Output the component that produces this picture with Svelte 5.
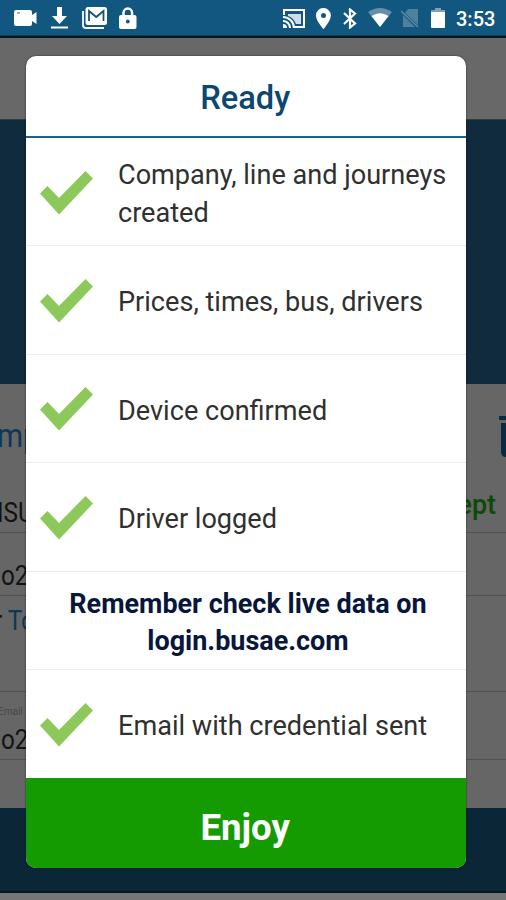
<script>
  const before = [
    { lines: ['Company, line and journeys', 'created'] },
    { lines: ['Prices, times, bus, drivers'] },
    { lines: ['Device confirmed'] },
    { lines: ['Driver logged'] }
  ];
  const after = [{ lines: ['Email with credential sent'] }];
</script>

{#snippet step(item)}
  <li class="step">
    <svg class="check" viewBox="0 0 53 44" aria-hidden="true"><path d="M0 22.5 7.5 15 19 27 45.5 0 53 7.5 19 43.5Z" /></svg>
    <p>{#each item.lines as line}<span>{line}</span>{/each}</p>
  </li>
{/snippet}

<div class="screen">
  <header class="status">
    <div class="left">
      <svg width="24" height="18" viewBox="0 0 24 18"><path fill="#fff" d="M2 1h14q2 0 2 2v3l4.500-3v12l-4.500-3v3q0 2-2 2H2q-2 0-2-2V3q0-2 2-2Z" /><path stroke="#789bad" stroke-width="1.5" d="M3 4h3" /></svg>
      <svg class="down" width="18" height="22" viewBox="0 0 18 22"><path fill="#fff" d="M6 0h5v9h5l-7.500 8L1 9h5ZM0 19.500h17v2H0Z" /></svg>
      <svg class="mail" width="26" height="22" viewBox="0 0 26 22"><path fill="none" stroke="#fff" stroke-width="1.800" d="M1 4v14q0 3 3 3h18" /><rect x="3.500" y="0" width="21.500" height="18" rx="2.500" fill="#fff" /><path fill="none" stroke="#165178" stroke-width="1.800" d="M7 14V4l7.200 6 7.300-6v10" /></svg>
      <svg class="lock" width="18" height="23" viewBox="0 0 18 23"><path fill="none" stroke="#fff" stroke-width="2.400" d="M4.500 10V6a4.300 4.500 0 0 1 8.600 0v4" /><rect y="8" width="17.500" height="14" rx="2" fill="#fff" /><circle cx="8.800" cy="14.500" r="1.900" fill="#125780" /></svg>
    </div>
    <div class="right">
      <svg class="cast" width="24" height="20" viewBox="0 0 24 20"><path fill="#fff" opacity=".8" d="M6 5h13v10h-5Q11 8 6 7Z" /><g fill="none" stroke="#fff" stroke-width="2"><path d="M2 6V1h20v17H13" /><path d="M1 8a11 11 0 0 1 11 11M1 12a7 7 0 0 1 7 7" /></g><path fill="#fff" d="M1 15a4 4 0 0 1 4 4H1Z" /></svg>
      <svg class="pin" width="16" height="21" viewBox="0 0 16 21"><path fill="#fff" fill-rule="evenodd" d="M7.500 0a7.300 7.300 0 0 1 7.300 7.500C14.800 13 7.500 21 7.500 21S0 13 0 7.500A7.300 7.300 0 0 1 7.500 0Zm0 5a2.500 2.500 0 1 0 0 5 2.500 2.500 0 0 0 0-5Z" /></svg>
      <svg class="bt" width="14" height="21" viewBox="0 0 14 21"><path fill="none" stroke="#fff" stroke-width="2.200" d="m1 5 11 10.500-5 4V1.500l5 4L1 16" /></svg>
      <svg class="wifi" width="24" height="20" viewBox="0 0 24 20"><path fill="#6690aa" d="M0 4Q12-4 24 4L12 19Z" /><path fill="#fff" d="M3.500 8Q12 2.500 20.500 8L12 19Z" /></svg>
      <svg class="sim" width="19" height="20" viewBox="0 0 19 20"><path fill="#4f809e" d="M7 0h10v16L4 4ZM2 6l12 12H2Z" /><path fill="none" stroke="#5f8ba6" stroke-width="1.600" d="m0 2 17 16" /></svg>
      <svg class="bat" width="15" height="21" viewBox="0 0 15 21"><path fill="#7fa0b5" d="M4 0h6v2h4v3H0V2h4Z" /><path fill="#fff" d="M0 4h14v15q0 1-1 1H1q-1 0-1-1Z" /></svg>
      <time>3:53</time>
    </div>
  </header>

  <main class="page" aria-hidden="true">
    <div class="toolbar"></div>
    <div class="banner"></div>
    <section class="form">
      <div class="row title"><span>mp</span>
        <svg width="7" height="42" viewBox="0 0 7 42"><path fill="#0b2b42" d="M0 0h7v4H0ZM2 7h5v34q-5 0-5-5Z" /></svg>
      </div>
      <div class="row account"><span>ISU</span><b>ept</b></div>
      <div class="row code"><span>o2</span></div>
      <div class="row to"><span>r <i>To</i></span></div>
      <div class="row mailrow"><small>Email</small><span>o2</span></div>
    </section>
    <div class="footer"></div>
  </main>

  <div class="dialog" role="dialog">
    <h1><span>Ready</span></h1>
    <ul>
      {#each before as item}{@render step(item)}{/each}
      <li class="note"><span>Remember check live data on</span><span>login.busae.com</span></li>
      {#each after as item}{@render step(item)}{/each}
    </ul>
    <button><span>Enjoy</span></button>
  </div>
</div>

<style>
  .screen { position: relative; width: 506px; height: 900px; overflow: hidden; display: flex; flex-direction: column; background: #767676; font-family: Roboto, "Noto Sans", sans-serif; }
  .status { height: 36px; box-sizing: border-box; flex: none; display: flex; justify-content: space-between; background: #125780; padding: 7px 11px 0 14px; border-bottom: 1px solid #0b3b58; }
  .left, .right { display: flex; align-items: flex-start; }
  .left svg:first-child { margin-top: 2px; }
  .down { margin-left: 13px; }
  .mail { margin-left: 13px; }
  .lock { margin-left: 11px; }
  .cast { margin-top: 2px; }
  .pin { margin: 1px 0 0 10px; }
  .bt { margin: 1px 0 0 11px; }
  .wifi { margin: 1px 0 0 11px; }
  .sim { margin: 2px 0 0 9px; }
  .bat { margin: 1px 0 0 11px; }
  time { width: 39px; margin: 1px 0 0 10px; color: #fff; font-size: 20px; font-weight: 500; line-height: 23px; }
  .page { flex: 1; display: flex; flex-direction: column; color: #131313; }
  .toolbar { height: 84px; box-sizing: border-box; background: #686868; border-top: 2px solid #07141d; border-bottom: 1px solid #303a40; }
  .banner { height: 264px; background: #102b3d; }
  .form { height: 424px; background: #666; display: flex; flex-direction: column; font-size: 27px; }
  .row { display: flex; box-sizing: border-box; justify-content: space-between; white-space: nowrap; border-bottom: 1px solid #515151; line-height: 32px; }
  .row > span { display: block; transform: scaleX(.9); transform-origin: left; }
  .title { height: 100px; border: 0; padding-top: 32px; color: #0b3957; font-size: 33px; line-height: 40px; }
  .title > span { margin-left: -3px; }
  .account { height: 49px; padding: 13px 10px 0 0; }
  .account > span { margin-left: -3px; }
  .account b { font-weight: 500; color: #0c4a05; font-size: 28px; transform: scaleX(.96) translateY(-8px); transform-origin: right; }
  .code { height: 63px; padding-top: 27px; }
  .code > span, .mailrow > span { margin-left: 1px; }
  .to { height: 96px; padding-top: 9px; }
  .to > span { margin-left: -6px; }
  i { font-style: normal; color: #0b3957; }
  .mailrow { height: 68px; flex-direction: column; justify-content: flex-start; padding-top: 14px; }
  small { font-size: 10px; line-height: 12px; color: #484848; margin-left: -2px; }
  .mailrow > span { margin-top: 6px; }
  .footer { height: 83px; background: #0a2637; border-bottom: 2px solid #061824; }
  .dialog { position: absolute; left: 25.500px; top: 55.500px; width: 440px; height: 812.500px; border-radius: 10px; overflow: hidden; background: #fff; display: flex; flex-direction: column; box-shadow: 0 0 2px #000a; }
  h1 { box-sizing: border-box; height: 82.500px; flex: none; margin: 0; border-bottom: 2px solid #1b6283; text-align: center; color: #0b4772; font-size: 33.500px; font-weight: 500; line-height: 84px; }
  h1 span, button span { display: inline-block; transform: scaleX(.975); }
  ul { list-style: none; margin: 0; padding: 0; }
  .step { box-sizing: border-box; height: 108.400px; display: flex; align-items: center; padding-left: 14.500px; border-bottom: 1.500px solid #ececec; }
  .step:last-child { border: 0; }
  .check { width: 53px; height: 44px; flex: none; fill: #8cc95a; margin-top: 2px; }
  p { margin: 4px 0 0 25px; color: #303030; font-size: 28px; line-height: 37.500px; white-space: nowrap; }
  p span, .note span { display: block; transform: scaleX(.968); transform-origin: left; }
  .note { box-sizing: border-box; height: 98px; padding: 13px 0 0 4px; text-align: center; color: #07163a; font-size: 27.500px; font-weight: 700; line-height: 37.500px; border-bottom: 1.500px solid #ececec; white-space: nowrap; }
  .note span { transform: scaleX(.98); transform-origin: center; }
  button { flex: 1; border: 0; padding: 9px 0 0; background: #149b02; color: #fff; font: 700 37px Roboto, sans-serif; }
  button span { transform: scaleX(.99); }
</style>
